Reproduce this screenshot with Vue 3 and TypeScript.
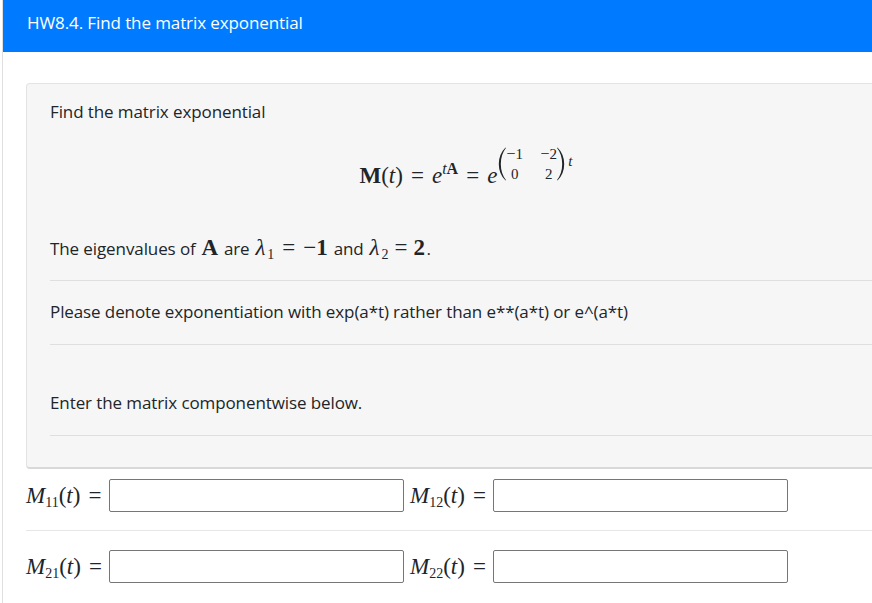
<script setup lang="ts">
const rows: { a: string; b: string }[] = [
  { a: '11', b: '12' },
  { a: '21', b: '22' },
]
</script>

<template>
  <div class="page">
    <div class="card">
      <header class="head">HW8.4. Find the matrix exponential</header>
      <div class="body">
        <section class="well">
          <p class="intro">Find the matrix exponential</p>
          <div class="display">
            <span class="math eq"><b>M</b>(<i>t</i>)<span class="rel">=</span><i>e</i><sup class="sup"><i>t</i><b>A</b></sup><span class="rel">=</span><i>e</i><span class="exp"><svg class="paren" width="8" height="34" viewBox="0 0 8 34"><path d="M7.500 .5C3 5 .8 10.500 .8 17S3 29 7.500 33.500L7.900 33C4.800 29 2.800 23.500 2.800 17S4.800 5 7.900 1Z" fill="#212529" /></svg><span class="matrix"><span><span class="minus">−</span>1</span><span><span class="minus">−</span>2</span><span>0</span><span>2</span></span><svg class="paren" width="8" height="34" viewBox="0 0 8 34"><path d="M.5 .5C5 5 7.200 10.500 7.200 17S5 29 .5 33.500L.1 33C3.200 29 5.200 23.500 5.200 17S3.200 5 .1 1Z" fill="#212529" /></svg><i class="exp-t">t</i></span></span>
          </div>
          <p class="eigen">The eigenvalues of <span class="math gap"><b>A</b></span> are <span class="math gap"><i class="lam">λ</i><sub>1</sub><span class="rel">=</span>−<span class="num">1</span></span> and <span class="math gap tight"><i class="lam">λ</i><sub>2</sub><span class="rel">=</span><span class="num">2</span></span>.</p>
          <hr class="rule" />
          <p class="note">Please denote exponentiation with exp(a*t) rather than e**(a*t) or e^(a*t)</p>
          <hr class="rule" />
          <p class="enter">Enter the matrix componentwise below.</p>
          <hr class="rule last" />
        </section>
        <template v-for="(row, i) in rows" :key="row.a">
          <hr v-if="i > 0" class="split" />
          <div class="entry">
            <label class="math label"><i>M</i><sub>{{ row.a }}</sub>(<i>t</i>)<span class="rel">=</span></label>
            <input class="field" type="text" />
            <label class="math label second"><i>M</i><sub>{{ row.b }}</sub>(<i>t</i>)<span class="rel">=</span></label>
            <input class="field" type="text" />
          </div>
        </template>
      </div>
    </div>
  </div>
</template>

<style>
html, body { margin: 0; background: #fff; overflow: hidden; }
</style>

<style scoped>
.page { width: 872px; height: 603px; overflow: hidden; padding-left: 2px; box-sizing: border-box; font-family: "Open Sans", "Noto Sans", sans-serif; color: #212529; }
.card { width: 1000px; height: 603px; box-sizing: border-box; border-left: 1px solid #dfdfdf; }
.head { height: 52px; box-sizing: border-box; background: #007bff; color: #fff; padding: 11px 0 0 24px; font-size: 17px; line-height: 24px; letter-spacing: -.1px; }
.body { padding: 31px 0 0 23px; }
.well { width: 888px; height: 386px; box-sizing: border-box; background: #f6f6f6; border: 1px solid #e3e3e3; border-bottom: 2px solid #d8d8d8; border-radius: 4px; padding: 16px 23px 0; }
p { margin: 0; font-size: 17px; line-height: 24px; letter-spacing: -.1px; }
.math { font-family: "Liberation Serif", serif; font-size: 23px; letter-spacing: 0; white-space: nowrap; }
.math i { font-style: italic; }
.math b { font-weight: 700; }
.math sub { font-size: 14px; line-height: 0; vertical-align: -4px; }
.gap { margin: 0 1.5px; }
.lam { padding-right: 2px; }
.rel { margin: 0 8px; }
.tight .rel { margin: 0 6px; }
.num { font-weight: 700; }
.display { display: flex; justify-content: center; height: 75px; margin-top: 12px; padding-right: 8px; }
.eq { display: block; height: 75px; line-height: 79px; }
.sup { font-size: 16px; line-height: 0; vertical-align: 9px; }
.exp { display: inline-flex; align-items: center; vertical-align: 2px; margin-left: 1px; line-height: 1; }
.matrix { display: grid; grid-template-columns: 17px 17px; column-gap: 17px; font-size: 15px; line-height: 20px; text-align: center; }
.minus { font-size: 16px; }
.exp-t { font-size: 15px; margin: 0 0 6px 3px; }
.eigen { margin-top: 25px; }
.rule { border: 0; border-top: 1px solid #dfdfdf; margin: 0; }
.eigen + .rule { margin-top: 19px; }
.note { margin-top: 19px; }
.note + .rule { margin-top: 20px; }
.enter { margin-top: 46px; }
.enter + .rule { margin-top: 20px; }
.entry { display: flex; align-items: center; height: 33px; }
.well + .entry { margin-top: 10px; }
.label { width: 83px; }
.second { width: 83px; margin-left: 6px; }
.field { width: 295px; height: 33px; box-sizing: border-box; border: 1px solid #767676; border-radius: 2px; background: #fff; padding: 0 4px; margin: 0; }
.split { border: 0; border-top: 1px solid #e6e6e6; margin: 18px 0 19px; }
</style>
